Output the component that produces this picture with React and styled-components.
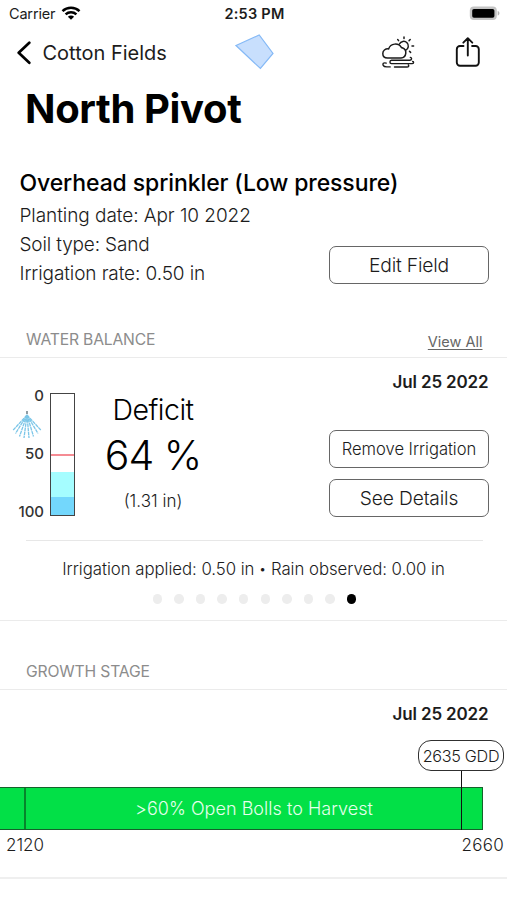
import React from 'react';
import styled, { createGlobalStyle } from 'styled-components';

const GlobalStyle = createGlobalStyle`
  * { box-sizing: border-box; }
  body {
    margin: 0;
    background: #fff;
    color: #1c1c1c;
    font-family: Inter, "Liberation Sans", sans-serif;
    overflow: hidden;
  }
`;

const Screen = styled.main`
  display: flex;
  flex-direction: column;
  width: 507px;
  height: 900px;
  background: #fff;
  overflow: hidden;
`;

const Label = styled.span`
  font-size: ${(p) => p.$size}px;
  font-weight: ${(p) => p.$weight || 300};
  letter-spacing: ${(p) => p.$track || 0}px;
  line-height: ${(p) => p.$line || 20}px;
  color: ${(p) => p.$color || '#1c1c1c'};
  white-space: nowrap;
`;

const StatusBar = styled.header`
  display: grid;
  grid-template-columns: 1fr auto 1fr;
  align-items: center;
  height: 27px;
  padding: 0 7px 0 9px;
`;

const Carrier = styled.div`
  display: flex;
  align-items: center;
  gap: 6px;

  svg { margin-top: -2px; }
`;

const Battery = styled.svg`
  justify-self: end;
`;

const NavBar = styled.nav`
  display: grid;
  grid-template-columns: 1fr 40px 1fr;
  align-items: center;
  height: 51px;
  padding: 0 24px 0 16px;
`;

const BackLink = styled.div`
  display: flex;
  align-items: center;
  gap: 10.5px;
`;

const FieldShape = styled.svg`
  margin: -1px 0 0 5px;
`;

const NavActions = styled.div`
  display: flex;
  justify-content: flex-end;
  align-items: center;
  gap: 38px;
`;

const ShareIcon = styled.svg`
  margin-top: -2px;
`;

const Title = styled.h1`
  margin: 0;
  padding: 0 25px;
  height: 61px;
  line-height: 61px;
  font-size: 40px;
  font-weight: 700;
  letter-spacing: -0.36px;
  color: #000;
`;

const Info = styled.section`
  display: flex;
  flex-direction: column;
  height: 184px;
  padding: 28px 18px 0 19.5px;
`;

const InfoBody = styled.div`
  display: flex;
  justify-content: space-between;
  padding-top: 1px;
`;

const InfoLines = styled.div`
  display: flex;
  flex-direction: column;
  padding-top: 0.8px;
`;

const Button = styled.button`
  display: flex;
  align-items: center;
  justify-content: center;
  width: 160px;
  height: 38px;
  padding: 0;
  border: 1px solid #666;
  border-radius: 7px;
  background: #fff;
  font-family: inherit;
`;

const EditSlot = styled.div`
  padding-top: 46px;
`;

const SectionHeader = styled.div`
  display: flex;
  justify-content: space-between;
  align-items: center;
  height: 35px;
  padding: 0 24.5px 0 26px;
  border-bottom: 1px solid #ebebeb;
`;

const ViewAll = styled.a`
  padding-top: 3px;
  font-size: 14.5px;
  line-height: 20px;
  color: #666;
  text-decoration: underline;
  text-decoration-thickness: 1px;
  text-underline-offset: 2px;
  text-decoration-skip-ink: none;
`;

const DateRow = styled.div`
  display: flex;
  justify-content: flex-end;
  padding: 14px 18.5px 0 0;
  height: 35px;
`;

const Balance = styled.section`
  display: flex;
  flex-direction: column;
  height: 263px;
  border-bottom: 1px solid #ebebeb;
`;

const BalanceBody = styled.div`
  display: grid;
  grid-template-columns: 44px 31px 156px 1fr;
  height: 123px;
  padding-right: 18px;
`;

const Scale = styled.div`
  display: grid;
  grid-template-rows: 18px 40px 18px 1fr 18px;
  justify-items: end;
  align-items: center;
  margin-top: -6px;
  height: 134px;
`;

const SprinklerSlot = styled.div`
  justify-self: start;
  display: flex;
  padding-left: 12px;
`;

const Gauge = styled.div`
  display: flex;
  flex-direction: column;
  width: 25px;
  height: 123px;
  margin-left: 6px;
  border: 1px solid #444;
`;

const GaugeBand = styled.div`
  height: ${(p) => p.$height}px;
  background: ${(p) => p.$fill};
`;

const Deficit = styled.div`
  display: flex;
  flex-direction: column;
  align-items: center;
  padding-top: 1px;
`;

const Actions = styled.div`
  display: flex;
  flex-direction: column;
  align-items: flex-end;
  gap: 11px;
  padding-top: 37px;
`;

const Rule = styled.hr`
  width: 457px;
  height: 1px;
  margin: 24px 0 0 26px;
  border: 0;
  background: #e7e7e7;
`;

const Summary = styled.div`
  display: flex;
  justify-content: center;
  height: 38px;
  padding-top: 18px;
`;

const Bullet = styled.span`
  font-size: 11px;
  font-weight: 400;
  line-height: 1;
  vertical-align: 2px;
  padding: 0 0.5px;
`;

const Dots = styled.div`
  display: flex;
  justify-content: center;
  gap: 12.1px;
  padding: 15px 0 0 2px;
`;

const Dot = styled.i`
  width: 9.5px;
  height: 9.5px;
  border-radius: 50%;
  background: ${(p) => (p.$active ? '#000' : '#ededed')};
`;

const Growth = styled.section`
  display: flex;
  flex-direction: column;
  height: 189px;
  border-bottom: 2px solid #efefef;
`;

const GrowthGap = styled.div`
  height: 34px;
`;

const Timeline = styled.div`
  position: relative;
  margin-top: 62px;
`;

const Stages = styled.div`
  display: flex;
  width: 483px;
  height: 43px;
  border: 1px solid #14622b;
  border-left: 0;
  background: #02e047;
`;

const PastStage = styled.div`
  width: 26px;
  border-right: 2px solid #07852c;
`;

const CurrentStage = styled.div`
  display: flex;
  flex: 1;
  align-items: center;
  justify-content: center;
`;

const Marker = styled.div`
  position: absolute;
  right: 3px;
  bottom: 0;
  display: flex;
  flex-direction: column;
  width: 86px;
  height: 90px;
`;

const MarkerPill = styled.div`
  display: flex;
  align-items: center;
  justify-content: center;
  height: 31px;
  border: 1.5px solid #303030;
  border-radius: 13px;
  background: #fff;
`;

const MarkerStem = styled.div`
  flex: 1;
  width: 1px;
  margin-left: 43px;
  background: #111;
`;

const Range = styled.div`
  display: flex;
  justify-content: space-between;
  padding: 5px 3px 0 6px;
`;

const rays = [
  [0.8, 20.5], [3.5, 23.5], [7.5, 26.5], [12, 28], [17, 28], [21.5, 26.5], [26, 23.5], [29.2, 20.5],
];

const Sprinkler = () => (
  <svg width="30" height="30" viewBox="0 0 30 30" fill="none">
    <path d="M15 5 9.500 12h11z" fill="#9ed8ef" opacity=".6" />
    {rays.map(([x, y]) => (
      <path key={x} d={`M15 5 ${x} ${y}`} stroke="#7cc6e8" strokeWidth="1.300" strokeDasharray="3.600 .6" />
    ))}
    <path d="M15 1v3" stroke="#75848c" strokeWidth="1.600" />
  </svg>
);

const Weather = () => (
  <svg width="34" height="34" viewBox="0 0 34 34" fill="none" stroke="#1b1b1b" strokeWidth="1.500" strokeLinecap="round" strokeLinejoin="round">
    <path d="M6.500 22h13.500a5.300 5.300 0 0 0 1.200-10.300h-.7a7.100 7.100 0 0 0-12.900 1.200C4.200 12.600 1.800 14.700 1.800 17.500s1.900 4.500 4.700 4.500z" />
    <path d="M18.400 8a4.700 4.700 0 1 1 6.200 6.300" />
    <path d="M23 1v1.600M16.700 3.500l.9 1.100M29.200 3.500l-1.100 1.100M31 9.900h1.600M28.500 15.300l1.100 1.100" />
    <path d="M10.500 24.300h18.300c2.200 0 2.300-2.800.5-2.900M10.500 24.300c-2 .2-2.200 3.100 0 3.300H31c2 0 2-2 .6-2.200M5.200 27.100c-2.800-.9-3.800.8-3 2.300.8 1.700 3 1.500 4 1.500h3M13.500 31H26c1.700 0 2.200-1.100 1.300-2" strokeWidth="1.400" />
  </svg>
);

export default function App() {
  return (
    <Screen>
      <GlobalStyle />
      <StatusBar>
        <Carrier>
          <Label $size={14.5} $weight={400} $track={-0.18}>Carrier</Label>
          <svg width="20" height="14" viewBox="0 0 20 14" fill="none" stroke="#000" strokeWidth="2.500">
            <path d="M1.500 5.200a12.300 12.300 0 0 1 17 0M4.600 8.300a7.900 7.900 0 0 1 10.800 0" />
            <path d="M10 13.800 6.900 10.700a4.400 4.400 0 0 1 6.200 0z" fill="#000" stroke="none" />
          </svg>
        </Carrier>
        <Label $size={14.5} $weight={600} $track={0.25}>2:53 PM</Label>
        <Battery width="31" height="15" viewBox="0 0 31 15">
          <rect x=".8" y=".6" width="27" height="13.500" rx="4" fill="#c4c4c4" />
          <rect x="3.200" y="3" width="22.200" height="8.800" rx="1.800" fill="#000" />
          <path d="M28.700 5.100c2.300.7 2.300 3.800 0 4.500z" fill="#b5b5b5" />
        </Battery>
      </StatusBar>

      <NavBar>
        <BackLink>
          <svg width="16" height="24" viewBox="0 0 16 24" fill="none" stroke="#000" strokeWidth="2.700" strokeLinecap="round" strokeLinejoin="round">
            <path d="M13.300 1.700 2.700 11.800l10.600 10" />
          </svg>
          <Label $size={20} $weight={400}>Cotton Fields</Label>
        </BackLink>
        <FieldShape width="40" height="36" viewBox="0 0 40 36">
          <path d="M1 11.500 24.200 1 38 19.500 25.400 34.500z" fill="#c8dffd" stroke="#85b9f6" strokeWidth="1.200" />
        </FieldShape>
        <NavActions>
          <Weather />
          <ShareIcon width="30" height="32" viewBox="0 0 30 32" fill="none" stroke="#111" strokeWidth="1.900" strokeLinecap="round" strokeLinejoin="round">
            <path d="M10.500 10H7a3.200 3.200 0 0 0-3.200 3.200v13.300a3.200 3.200 0 0 0 3.200 3.200h15.600a3.200 3.200 0 0 0 3.200-3.200V13.200A3.200 3.200 0 0 0 22.600 10h-3.500M14.800 19.500V2.500M10.300 6.700 14.800 2.200l4.500 4.500" />
          </ShareIcon>
        </NavActions>
      </NavBar>

      <Title>North Pivot</Title>

      <Info>
        <Label $size={23} $weight={500} $track={-0.1} $line={32} $color="#000">Overhead sprinkler (Low pressure)</Label>
        <InfoBody>
          <InfoLines>
            <Label $size={19} $track={-0.06} $line={29.3}>Planting date: Apr 10 2022</Label>
            <Label $size={19} $track={-0.15} $line={29.3}>Soil type: Sand</Label>
            <Label $size={19} $track={-0.1} $line={29.3}>Irrigation rate: 0.50 in</Label>
          </InfoLines>
          <EditSlot>
            <Button><Label $size={19.3} $track={-0.2}>Edit Field</Label></Button>
          </EditSlot>
        </InfoBody>
      </Info>

      <SectionHeader>
        <Label $size={15.7} $weight={400} $track={-0.18} $color="#8c8c8c">WATER BALANCE</Label>
        <ViewAll>View All</ViewAll>
      </SectionHeader>
      <Balance>
        <DateRow><Label $size={17} $weight={600} $track={-0.15}>Jul 25 2022</Label></DateRow>
        <BalanceBody>
          <Scale>
            <Label $size={15} $weight={500} $color="#333">0</Label>
            <SprinklerSlot><Sprinkler /></SprinklerSlot>
            <Label $size={15} $weight={500} $color="#333">50</Label>
            <span />
            <Label $size={15} $weight={500} $color="#333">100</Label>
          </Scale>
          <Gauge>
            <GaugeBand $height={60} $fill="#fff" />
            <GaugeBand $height={2} $fill="#f58b93" />
            <GaugeBand $height={16} $fill="#fff" />
            <GaugeBand $height={25} $fill="#a5fdff" />
            <GaugeBand $height={18} $fill="#73d7fc" />
          </Gauge>
          <Deficit>
            <Label $size={28.5} $track={-0.5} $line={32} $color="#000">Deficit</Label>
            <Label $size={41} $track={-1} $line={59} $color="#000">64 %</Label>
            <Label $size={17} $line={32}>(1.31 in)</Label>
          </Deficit>
          <Actions>
            <Button><Label $size={16.6} $track={-0.04}>Remove Irrigation</Label></Button>
            <Button><Label $size={19.2} $track={-0.15}>See Details</Label></Button>
          </Actions>
        </BalanceBody>
        <Rule />
        <Summary>
          <Label $size={16.8} $track={-0.04}>Irrigation applied: 0.50 in <Bullet>•</Bullet> Rain observed: 0.00 in</Label>
        </Summary>
        <Dots>
          {Array.from({ length: 10 }, (_, i) => <Dot key={i} $active={i === 9} />)}
        </Dots>
      </Balance>

      <GrowthGap />
      <SectionHeader>
        <Label $size={15.7} $weight={400} $track={-0.16} $color="#8c8c8c">GROWTH STAGE</Label>
      </SectionHeader>
      <Growth>
        <DateRow><Label $size={17} $weight={600} $track={-0.15}>Jul 25 2022</Label></DateRow>
        <Timeline>
          <Stages>
            <PastStage />
            <CurrentStage>
              <Label $size={18} $track={0.03} $color="#e6ffed">&gt;60% Open Bolls to Harvest</Label>
            </CurrentStage>
          </Stages>
          <Marker>
            <MarkerPill><Label $size={16.2} $track={-0.3}>2635 GDD</Label></MarkerPill>
            <MarkerStem />
          </Marker>
        </Timeline>
        <Range>
          <Label $size={17}>2120</Label>
          <Label $size={17} $track={0.3}>2660</Label>
        </Range>
      </Growth>
    </Screen>
  );
}
